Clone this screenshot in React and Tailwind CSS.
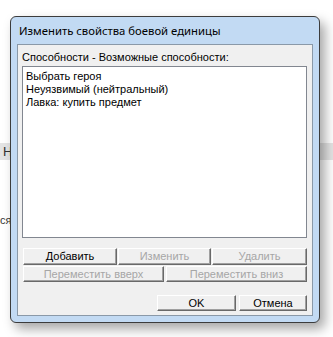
const FONT = { fontFamily: '"Liberation Sans", Arial, sans-serif' };

const ABILITIES = ['Выбрать героя', 'Неуязвимый (нейтральный)', 'Лавка: купить предмет'];

function Btn({ children, disabled, className = '' }) {
  return (
    <div
      className={`flex items-center justify-center border border-t-white border-l-white border-r-[#696969] border-b-[#696969] bg-[#f0f0f0] text-[11px] leading-none shadow-[inset_-1px_-1px_0_#a0a0a0] ${
        disabled ? 'text-[#a6a6a6]' : 'text-black'
      } ${className}`}
    >
      {children}
    </div>
  );
}

export default function App() {
  return (
    <div className="relative h-[337px] w-[333px] overflow-hidden bg-white" style={FONT}>
      {/* page behind the dialog */}
      <div className="absolute left-0 top-[143px] h-[17px] w-[333px] bg-[#e4e4e4]" />
      <div className="absolute left-[3px] top-[143px] text-[13px] leading-[17px] text-[#333]">Н</div>
      <div className="absolute left-0 top-[214px] text-[11px] leading-[13px] text-[#333]">ся</div>

      <div className="relative ml-[10px] mt-[16px] flex h-[307px] w-[310px] flex-col rounded-[6px] border border-[#3c3c3c] bg-[#c2daf3] px-[6px] pb-[6px] shadow-[5px_6px_12px_rgba(0,0,0,0.35)]">
        <div
          className="flex h-[27px] items-center pl-[2px] pt-[2px] text-[11.3px] text-black"
          style={{ fontFamily: '"Noto Sans", "Open Sans", sans-serif' }}
        >
          Изменить свойства боевой единицы
        </div>

        <div className="flex flex-1 flex-col border border-[#8a99a8] bg-[#f0f0f0] pl-[4px] pr-[5px]">
          <div className="mt-[6px] h-[13px] text-[11px] leading-[13px] text-black">
            Способности - Возможные способности:
          </div>
          <div className="mt-[2px] h-[172px] border border-[#828790] bg-white pl-[3px] pt-[3px]">
            {ABILITIES.map((item) => (
              <div key={item} className="text-[11px] leading-[13px] text-black">
                {item}
              </div>
            ))}
          </div>

          <div className="ml-[1px] mt-[10px] flex gap-[1px]">
            <Btn className="h-[17px] w-[94px]">Добавить</Btn>
            <Btn disabled className="h-[17px] w-[93px]">Изменить</Btn>
            <Btn disabled className="h-[17px] w-[95px]">Удалить</Btn>
          </div>
          <div className="ml-[1px] mt-[1px] flex gap-[2px]">
            <Btn disabled className="h-[16px] w-[141px]">Переместить вверх</Btn>
            <Btn disabled className="h-[16px] w-[141px]">Переместить вниз</Btn>
          </div>

          <div className="mt-[13px] flex justify-end gap-[3px]">
            <Btn className="h-[16px] w-[79px]">OK</Btn>
            <Btn className="h-[16px] w-[68px]">Отмена</Btn>
          </div>
        </div>
      </div>
    </div>
  );
}
